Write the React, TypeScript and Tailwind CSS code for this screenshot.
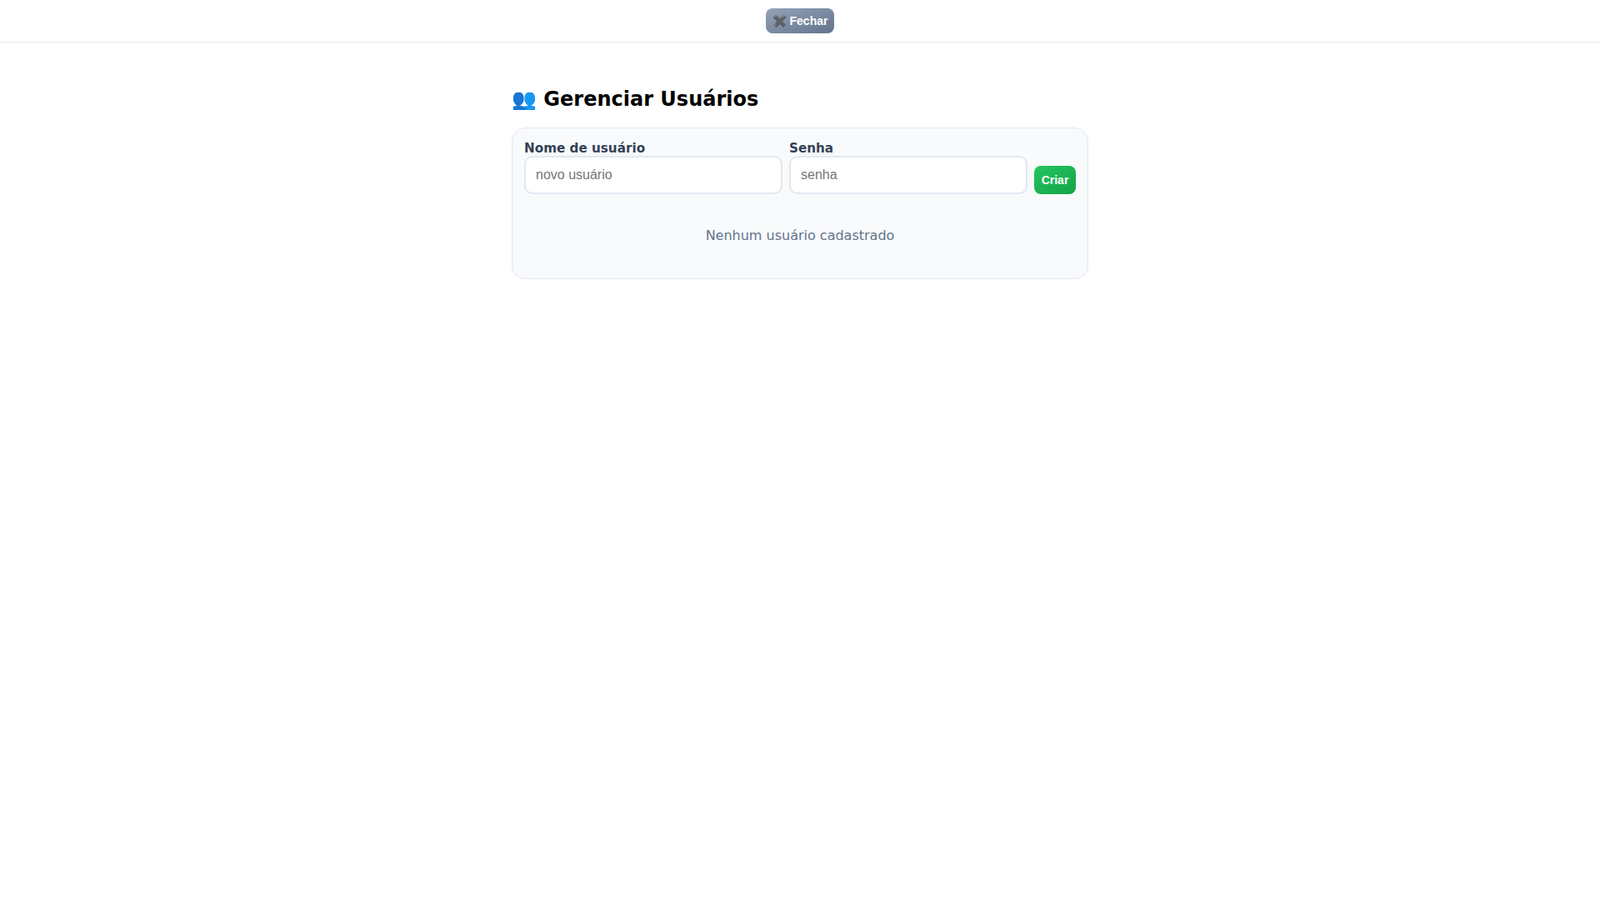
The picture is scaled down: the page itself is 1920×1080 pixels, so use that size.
export default function App() {
  return (
    <div className="min-h-screen bg-white font-['DejaVu_Sans',sans-serif]">
      <div className="flex h-[51px] items-start justify-center border-b border-[#e5e7eb] pt-[10px]">
        <button className="flex h-[30px] items-center gap-1 rounded-lg bg-gradient-to-br from-[#94a3b8] to-[#64748b] px-2 font-['Liberation_Sans',sans-serif] text-sm font-bold text-white">
          <span>✖️</span>
          <span>Fechar</span>
        </button>
      </div>

      <div className="mx-auto w-[692px] pt-[50px]">
        <h2 className="mb-4 text-2xl leading-[36px] font-bold text-black">👥 Gerenciar Usuários</h2>

        <div className="h-[182px] rounded-2xl border border-[#e2e8f0] bg-[#f8fafc] px-[14px] pt-4">
          <div className="flex items-end gap-2">
            <label className="w-[310px] text-[15.2px] leading-[17px] font-bold text-[#334155]">
              Nome de usuário
              <input
                placeholder="novo usuário"
                className="block h-[46px] w-full rounded-[10px] border-2 border-[#e2e8f0] bg-white px-3 font-['Liberation_Sans',sans-serif] text-base font-normal outline-none placeholder:text-[#757575]"
              />
            </label>
            <label className="w-[286px] text-[15.2px] leading-[17px] font-bold text-[#334155]">
              Senha
              <input
                placeholder="senha"
                className="block h-[46px] w-full rounded-[10px] border-2 border-[#e2e8f0] bg-white px-3 font-['Liberation_Sans',sans-serif] text-base font-normal outline-none placeholder:text-[#757575]"
              />
            </label>
            <button className="h-[34px] w-[50px] rounded-lg bg-gradient-to-br from-[#22c55e] to-[#16a34a] font-['Liberation_Sans',sans-serif] text-sm font-bold text-white">
              Criar
            </button>
          </div>
          <p className="mt-[40px] text-center text-base leading-[19px] text-[#64748b]">Nenhum usuário cadastrado</p>
        </div>
      </div>
    </div>
  );
}
